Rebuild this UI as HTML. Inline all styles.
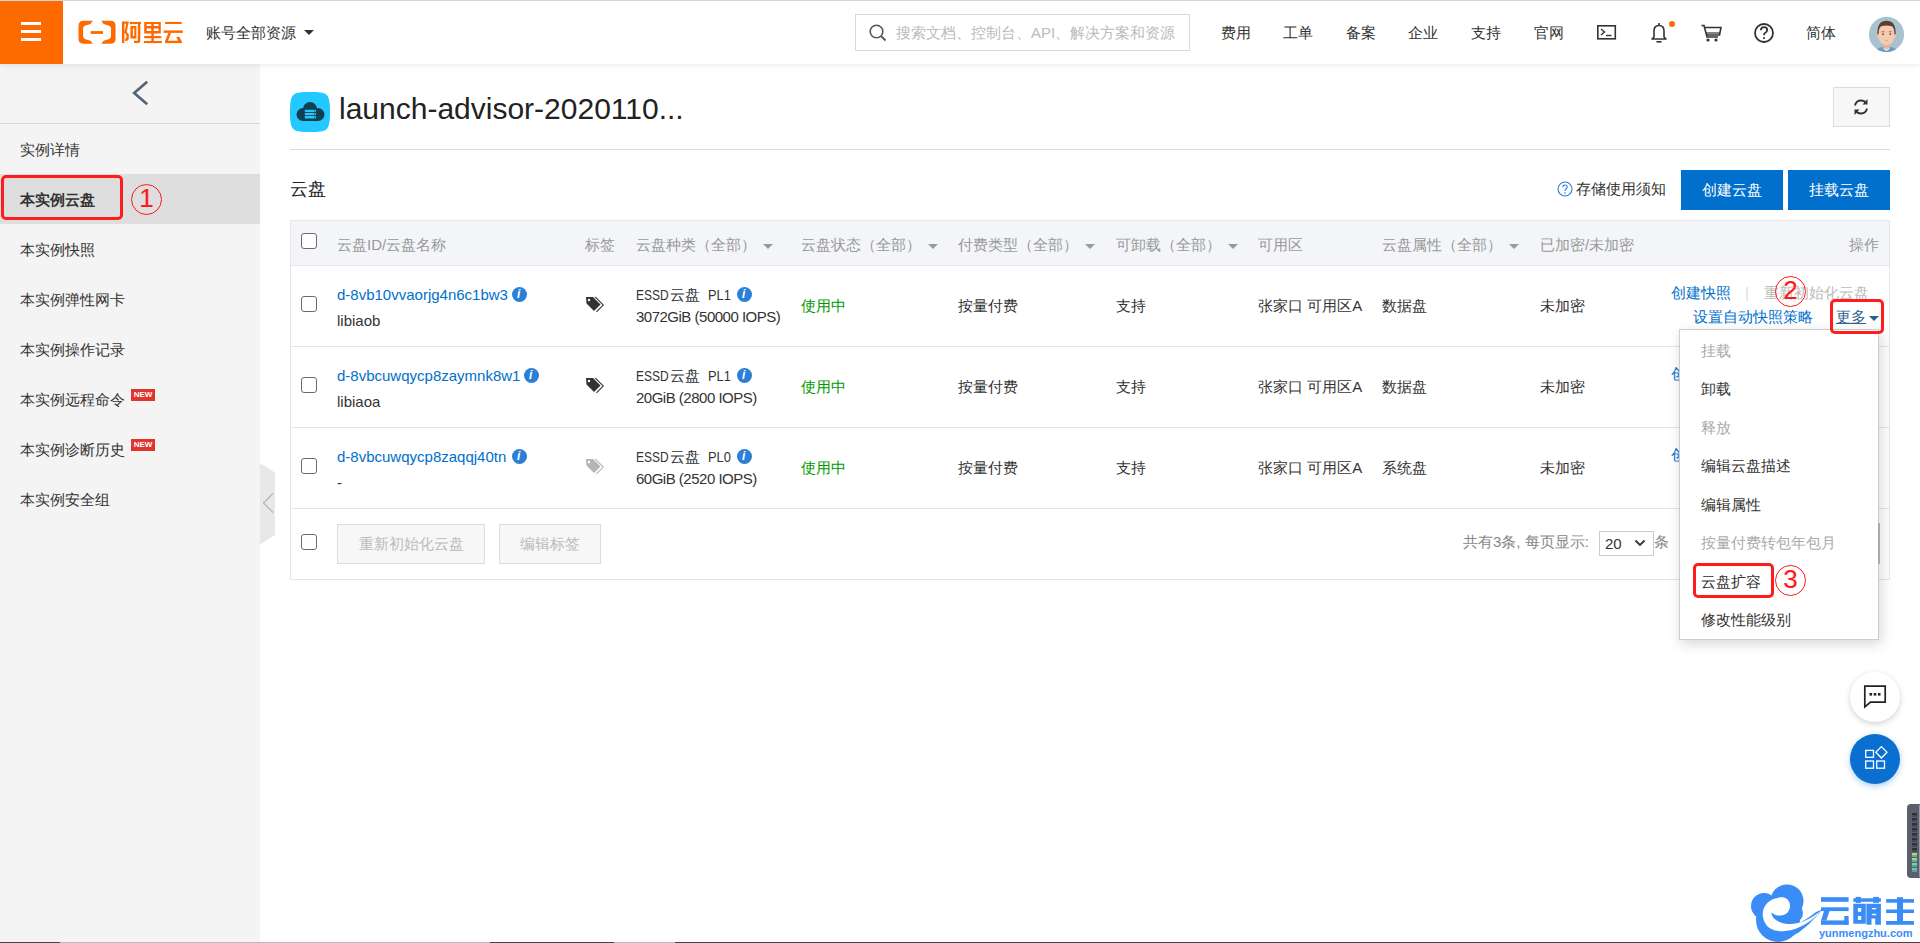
<!DOCTYPE html>
<html><head><meta charset="utf-8">
<style>
*{box-sizing:border-box;margin:0;padding:0}
html,body{width:1920px;height:943px;overflow:hidden;background:#fff;font-family:"Liberation Sans",sans-serif;font-size:15px;color:#333}
.a{position:absolute;white-space:nowrap;line-height:20px}
#top{position:absolute;left:0;top:0;width:1920px;height:64px;background:#fff;border-top:1px solid #d3d6db;box-shadow:0 2px 5px rgba(0,0,0,.07);z-index:5}
#ham{position:absolute;left:0;top:0;width:63px;height:63px;background:#ff6a00}
#ham i{position:absolute;left:21px;width:20px;height:3px;background:#fff}
#side{position:absolute;left:0;top:64px;width:260px;height:879px;background:#f4f4f4}
.mi{left:20px;color:#333}
.th{top:235px;color:#999}
.tri{position:absolute;width:0;height:0;border-left:5px solid transparent;border-right:5px solid transparent;border-top:5px solid #666}
.cb{position:absolute;left:301px;width:16px;height:16px;border:1.3px solid #6b6b6b;border-radius:3px;background:#fff}
.lnk{color:#0070cc}
.info{position:absolute;width:15px;height:15px;border-radius:50%;background:#2b7fd6}
.info:after{content:"i";position:absolute;left:5px;top:0;color:#fff;font-style:italic;font-weight:bold;font-size:12px;line-height:15px}
.hl{position:absolute;left:290px;width:1600px;height:1px;background:#e3e7ec}
.rc{position:absolute;width:31px;height:31px;border-radius:50%;border:1.8px solid #ff1a1a;color:#ff1a1a;text-align:center;font-size:26px;line-height:27px;-webkit-text-stroke:0.15px #ff1a1a}
.rb{position:absolute;border:3.8px solid #ff1c1c;border-radius:5px}
.new{position:absolute;left:131px;width:24px;height:12px;background:#e0352b;color:#fff;font-size:8px;font-weight:bold;line-height:12px;text-align:center}
.dm{left:1701px;color:#333}
.dm.g{color:#aaa}
.btn{position:absolute;background:#f7f7f7;border:1px solid #dcdcdc;color:#bbb;text-align:center;line-height:38px}
.pb{position:absolute;background:#0070cc;color:#fff;text-align:center;line-height:40px}
</style></head><body>

<!-- TOP BAR -->
<div id="top">
  <div id="ham"><i style="top:21px"></i><i style="top:29px"></i><i style="top:37px"></i></div>
  <svg class="a" style="left:76px;top:17px" width="110" height="28" viewBox="76 18 110 28"><g fill="#ff6a00">
    <path d="M92.9 20.8 H83.5 Q78.5 20.8 78.5 26 V38.6 Q78.5 43.8 83.5 43.8 H92.9 L90.5 40.8 L85.5 39.2 Q83.1 38.5 83.1 36 V28.5 Q83.1 26 85.5 25.4 L90.5 23.9 Z"/>
    <path d="M101.2 20.8 H110.6 Q115.6 20.8 115.6 26 V38.6 Q115.6 43.8 110.6 43.8 H101.2 L103.6 40.8 L108.6 39.2 Q111 38.5 111 36 V28.5 Q111 26 108.6 25.4 L103.6 23.9 Z"/>
    <rect x="90.7" y="31.1" width="12.3" height="2.8"/>
    <path d="M121.9 21.5 H128.8 L126.7 32 L128.8 34.2 V38.8 Q128.8 40.9 126.2 40.9 H125.2 V38.6 Q126.4 38.6 126.4 37.6 V35 L124.4 32.6 L126.2 23.8 H124.4 V43.1 H121.9 Z"/>
    <rect x="129.7" y="21.9" width="11.3" height="2.2"/>
    <path d="M137.8 21.9 H140.3 V40.5 Q140.3 43.1 137.5 43.1 H134 V40.7 H137.8 Z"/>
    <path fill-rule="evenodd" d="M130.4 26.1 H136.4 V38.5 H130.4 Z M132.9 28.6 V36 H134.3 V28.6 Z"/>
    <path fill-rule="evenodd" d="M144.2 21.9 H160.8 V33.6 H144.2 Z M146.7 24 V26.1 H151.3 V24 Z M153.8 24 V26.1 H158.6 V24 Z M146.7 28.6 V31.1 H151.3 V28.6 Z M153.8 28.6 V31.1 H158.6 V28.6 Z"/>
    <rect x="151.3" y="33" width="2.5" height="8.5"/>
    <rect x="144.2" y="36" width="17" height="2.2"/>
    <rect x="143.9" y="41" width="18" height="2.1"/>
    <rect x="165.1" y="21.9" width="16.6" height="2.1"/>
    <rect x="163.7" y="30.4" width="19.1" height="2.5"/>
    <polygon points="168.3,32.9 171.1,32.9 167.9,40.9 165.1,40.9"/>
    <rect x="165.1" y="40.7" width="16.6" height="2.4"/>
    <polygon points="176.4,37.1 179.6,37.1 182.1,43.1 178.9,43.1"/>
  </g></svg>
  <div class="a" style="left:206px;top:22px">账号全部资源</div>
  <div class="tri" style="left:304px;top:29px;border-top-color:#333"></div>
  <div class="a" style="left:855px;top:13px;width:335px;height:37px;border:1px solid #d9d9d9;"></div>
  <svg class="a" style="left:869px;top:23px" width="18" height="18" viewBox="0 0 18 18"><circle cx="7.5" cy="7.5" r="6.3" fill="none" stroke="#555" stroke-width="1.6"/><path d="M12 12 L16.5 16.5" stroke="#555" stroke-width="1.8"/></svg>
  <div class="a" style="left:896px;top:22px;color:#bbb">搜索文档、控制台、API、解决方案和资源</div>
  <div class="a" style="left:1221px;top:22px">费用</div>
  <div class="a" style="left:1283px;top:22px">工单</div>
  <div class="a" style="left:1346px;top:22px">备案</div>
  <div class="a" style="left:1408px;top:22px">企业</div>
  <div class="a" style="left:1471px;top:22px">支持</div>
  <div class="a" style="left:1534px;top:22px">官网</div>
  <svg class="a" style="left:1596px;top:23px" width="22" height="18" viewBox="0 0 22 18"><rect x="1.8" y="1.8" width="17.5" height="13" fill="none" stroke="#333" stroke-width="1.6"/><path d="M5 5 L8.5 8 L5 11" fill="none" stroke="#333" stroke-width="1.4"/><path d="M10 11.5 H15.5" stroke="#333" stroke-width="1.4"/></svg>
  <svg class="a" style="left:1650px;top:21px" width="18" height="22" viewBox="0 0 18 22"><path d="M9 1 V3" stroke="#333" stroke-width="1.6"/><path d="M4 15 V9 Q4 3.5 9 3.5 Q14 3.5 14 9 V15 L16 17 H2 Z" fill="none" stroke="#333" stroke-width="1.6" stroke-linejoin="round"/><path d="M6.5 19.8 H11.5" stroke="#333" stroke-width="1.6"/></svg>
  <div class="a" style="left:1669px;top:20px;width:6px;height:6px;border-radius:50%;background:#ff6a00"></div>
  <svg class="a" style="left:1701px;top:23px" width="22" height="20" viewBox="0 0 22 20"><path d="M0.5 1.5 H3 L6 13 H17" fill="none" stroke="#333" stroke-width="1.6"/><path d="M4 3.5 H20 L18.5 11 H6" fill="none" stroke="#333" stroke-width="1.6"/><path d="M5 9 H19" stroke="#333" stroke-width="1.2"/><circle cx="7" cy="16" r="1.6" fill="#333"/><circle cx="15" cy="16" r="1.6" fill="#333"/></svg>
  <svg class="a" style="left:1753px;top:21px" width="22" height="22" viewBox="0 0 22 22"><circle cx="11" cy="11" r="9" fill="none" stroke="#333" stroke-width="1.8"/><path d="M7.8 8.3 Q8 5.2 11 5.2 Q14.2 5.2 14.2 8 Q14.2 9.8 12 11 Q11 11.6 11 13.3" fill="none" stroke="#333" stroke-width="1.8"/><circle cx="11" cy="16" r="1.1" fill="#333"/></svg>
  <div class="a" style="left:1806px;top:22px">简体</div>
  <svg class="a" style="left:1868px;top:15px" width="37" height="37" viewBox="1868 16 37 37">
    <defs><clipPath id="av"><circle cx="1886.5" cy="34.4" r="17.6"/></clipPath></defs>
    <circle cx="1886.5" cy="34.4" r="17.6" fill="#a8c3cf"/>
    <g clip-path="url(#av)">
      <path d="M1873 53 Q1876 48 1882 47 H1891 Q1897 48 1900 53 Z" fill="#6e9cbc"/>
      <path d="M1883.5 42 H1889.5 V48 Q1886.5 50 1883.5 48 Z" fill="#e9b095"/>
      <path d="M1883.8 47.5 L1886.5 49.5 L1889.2 47.5 L1889.5 49 L1886.5 51 L1883.5 49 Z" fill="#e8eef2"/>
      <ellipse cx="1878.3" cy="36" rx="1.6" ry="2.4" fill="#f1c0a0"/><ellipse cx="1894.7" cy="36" rx="1.6" ry="2.4" fill="#f1c0a0"/>
      <path d="M1879 30 Q1879 22 1886.5 22 Q1894 22 1894 30 V37 Q1894 44.5 1886.5 45 Q1879 44.5 1879 37 Z" fill="#f6cbb0"/>
      <path d="M1877.5 35 Q1876.5 21 1886.5 20.8 Q1896.5 21 1895.5 35 L1894.3 33.5 Q1894.5 27 1891 26 Q1886.5 25.2 1882 26 Q1878.6 27 1878.7 33.5 Z" fill="#5b3e35"/>
      <circle cx="1883" cy="34.2" r="0.9" fill="#6b4c40"/><circle cx="1890.3" cy="34.2" r="0.9" fill="#6b4c40"/>
      <path d="M1881.5 31.8 H1884.5 M1888.8 31.8 H1891.8" stroke="#6b4c40" stroke-width="0.7"/>
      <path d="M1885 40.5 H1888" stroke="#d9a088" stroke-width="0.7"/>
    </g>
  </svg>
</div>

<!-- SIDEBAR -->
<div id="side">
  <div class="a" style="left:0;top:110px;width:260px;height:50px;background:#dedede"></div>
  <div class="a" style="left:0;top:59px;width:260px;height:1px;background:#d9d9d9"></div>
</div>
<svg class="a" style="left:130px;top:79px" width="20" height="28" viewBox="0 0 20 28"><path d="M17.2 2.8 L4.2 14 L17.2 25.2" fill="none" stroke="#546478" stroke-width="2.7"/></svg>
<div class="a mi" style="top:140px">实例详情</div>
<div class="a mi" style="top:190px;font-weight:bold">本实例云盘</div>
<div class="a mi" style="top:240px">本实例快照</div>
<div class="a mi" style="top:290px">本实例弹性网卡</div>
<div class="a mi" style="top:340px">本实例操作记录</div>
<div class="a mi" style="top:390px">本实例远程命令</div>
<div class="new" style="top:389px">NEW</div>
<div class="a mi" style="top:440px">本实例诊断历史</div>
<div class="new" style="top:439px">NEW</div>
<div class="a mi" style="top:490px">本实例安全组</div>
<div class="rb" style="left:1px;top:175px;width:122px;height:45px"></div>
<div class="rc" style="left:131px;top:184px">1</div>
<svg class="a" style="left:260px;top:463px" width="16" height="82" viewBox="0 0 16 82"><path d="M0 0 L15 9.5 V72 L0 81.5 Z" fill="#e8e8e8"/><path d="M13 30.5 L3.5 40 L13 49.5" fill="none" stroke="#b3b3b3" stroke-width="1.1"/></svg>

<!-- MAIN -->
<svg class="a" style="left:290px;top:92px" width="40" height="40" viewBox="0 0 40 40">
  <path d="M20 0 C37 0 40 0.5 40 20 C40 39.5 37 40 20 40 C3 40 0 39.5 0 20 C0 0.5 3 0 20 0 Z" fill="#22c8ff"/>
  <g fill="#123f50"><circle cx="13" cy="22.5" r="6.5"/><circle cx="20" cy="17" r="7"/><circle cx="28" cy="22.5" r="6.5"/><rect x="13" y="18" width="15" height="11"/></g>
  <g fill="#22c8ff"><rect x="14.8" y="17.8" width="11.2" height="2.2"/><rect x="14.8" y="20.9" width="11.2" height="2.3"/><rect x="14.8" y="24" width="11.2" height="2.5"/></g>
  <g fill="#123f50"><rect x="24.3" y="18.3" width="0.9" height="1.2"/><rect x="24.3" y="21.5" width="0.9" height="1.2"/><rect x="24.3" y="24.6" width="0.9" height="1.2"/></g>
</svg>
<div class="a" style="left:339px;top:89px;font-size:30px;line-height:40px;color:#222">launch-advisor-2020110...</div>
<div class="a" style="left:1833px;top:87px;width:57px;height:40px;background:#f7f7f7;border:1px solid #dcdcdc"></div>
<svg class="a" style="left:1852px;top:97px" width="18" height="20" viewBox="0 0 18 20"><path d="M3 8.5 Q4 3.5 9 3.5 Q12.5 3.5 14 6" fill="none" stroke="#333" stroke-width="1.8"/><path d="M15.5 2 V7.5 H10.5 Z" fill="#333"/><path d="M15 11.5 Q14 16.5 9 16.5 Q5.5 16.5 4 14" fill="none" stroke="#333" stroke-width="1.8"/><path d="M2.5 18 V12.5 H7.5 Z" fill="#333"/></svg>
<div class="a" style="left:290px;top:149px;width:1600px;height:1px;background:#dcdcdc"></div>
<div class="a" style="left:290px;top:179px;font-size:18px;color:#222">云盘</div>
<svg class="a" style="left:1557px;top:181px" width="16" height="16" viewBox="0 0 16 16"><circle cx="8" cy="8" r="7" fill="none" stroke="#2b7fd6" stroke-width="1.1"/><path d="M5.8 6.2 Q5.8 4 8 4 Q10.2 4 10.2 6 Q10.2 7.3 8.8 8 Q8 8.5 8 10" fill="none" stroke="#2b7fd6" stroke-width="1.1"/><circle cx="8" cy="12" r=".8" fill="#2b7fd6"/></svg>
<div class="a" style="left:1576px;top:179px;color:#333">存储使用须知</div>
<div class="pb" style="left:1681px;top:170px;width:102px;height:40px">创建云盘</div>
<div class="pb" style="left:1788px;top:170px;width:102px;height:40px">挂载云盘</div>

<!-- TABLE -->
<div class="a" style="left:290px;top:220px;width:1600px;height:360px;border:1px solid #e3e7ec"></div>
<div class="a" style="left:291px;top:221px;width:1598px;height:44px;background:#f3f5f8"></div>
<div class="hl" style="top:265px"></div>
<div class="hl" style="top:346px"></div>
<div class="hl" style="top:427px"></div>
<div class="hl" style="top:508px"></div>

<div class="cb" style="top:233px"></div>
<div class="a th" style="left:337px">云盘ID/云盘名称</div>
<div class="a th" style="left:585px">标签</div>
<div class="a th" style="left:636px">云盘种类（全部）</div><div class="tri" style="left:763px;top:244px;border-top-color:#999"></div>
<div class="a th" style="left:801px">云盘状态（全部）</div><div class="tri" style="left:928px;top:244px;border-top-color:#999"></div>
<div class="a th" style="left:958px">付费类型（全部）</div><div class="tri" style="left:1085px;top:244px;border-top-color:#999"></div>
<div class="a th" style="left:1116px">可卸载（全部）</div><div class="tri" style="left:1228px;top:244px;border-top-color:#999"></div>
<div class="a th" style="left:1258px">可用区</div>
<div class="a th" style="left:1382px">云盘属性（全部）</div><div class="tri" style="left:1509px;top:244px;border-top-color:#999"></div>
<div class="a th" style="left:1540px">已加密/未加密</div>
<div class="a th" style="left:1849px">操作</div>

<!-- rows placeholder -->
<div class="cb" style="top:296px"></div>
<div class="a lnk" style="left:337px;top:285px">d-8vb10vvaorjg4n6c1bw3</div>
<div class="info" style="left:512px;top:287px"></div>
<div class="a" style="left:337px;top:311px">libiaob</div>
<svg class="a" style="left:585px;top:296px" width="21" height="17" viewBox="0 0 21 17"><path d="M9.5 1 L17.5 9 L11 15.5 L11.8 16.3 L19 9 L10.8 0.8 Z" fill="#333"/><path d="M1 1 H8 L15.5 8.5 L9 15 L1.5 7.5 Z" fill="#333"/><circle cx="4" cy="4" r="1.2" fill="#fff"/></svg>
<div class="a" style="left:636px;top:285px;transform:scaleX(0.8);transform-origin:0 0">ESSD</div><div class="a" style="left:670px;top:285px">云盘</div><div class="a" style="left:708px;top:285px;transform:scaleX(0.86);transform-origin:0 0">PL1</div>
<div class="info" style="left:737px;top:287px"></div>
<div class="a" style="left:636px;top:307px;letter-spacing:-0.5px">3072GiB (50000 IOPS)</div>
<div class="a" style="left:801px;top:296px;color:#009a00">使用中</div>
<div class="a" style="left:958px;top:296px">按量付费</div>
<div class="a" style="left:1116px;top:296px">支持</div>
<div class="a" style="left:1258px;top:296px">张家口 可用区A</div>
<div class="a" style="left:1382px;top:296px">数据盘</div>
<div class="a" style="left:1540px;top:296px">未加密</div>
<div class="a lnk" style="left:1671px;top:283px">创建快照</div>
<div class="a" style="left:1745px;top:283px;color:#ddd">|</div>
<div class="a" style="left:1764px;top:283px;color:#bbb">重新初始化云盘</div>
<div class="a lnk" style="left:1693px;top:307px">设置自动快照策略</div>
<div class="a" style="left:1836px;top:307px;color:#2d5f91;text-decoration:underline">更多</div>
<div class="tri" style="left:1869px;top:316px;border-top-color:#2d5f91"></div>
<div class="cb" style="top:377px"></div>
<div class="a lnk" style="left:337px;top:366px">d-8vbcuwqycp8zaymnk8w1</div>
<div class="info" style="left:524px;top:368px"></div>
<div class="a" style="left:337px;top:392px">libiaoa</div>
<svg class="a" style="left:585px;top:377px" width="21" height="17" viewBox="0 0 21 17"><path d="M9.5 1 L17.5 9 L11 15.5 L11.8 16.3 L19 9 L10.8 0.8 Z" fill="#333"/><path d="M1 1 H8 L15.5 8.5 L9 15 L1.5 7.5 Z" fill="#333"/><circle cx="4" cy="4" r="1.2" fill="#fff"/></svg>
<div class="a" style="left:636px;top:366px;transform:scaleX(0.8);transform-origin:0 0">ESSD</div><div class="a" style="left:670px;top:366px">云盘</div><div class="a" style="left:708px;top:366px;transform:scaleX(0.86);transform-origin:0 0">PL1</div>
<div class="info" style="left:737px;top:368px"></div>
<div class="a" style="left:636px;top:388px;letter-spacing:-0.5px">20GiB (2800 IOPS)</div>
<div class="a" style="left:801px;top:377px;color:#009a00">使用中</div>
<div class="a" style="left:958px;top:377px">按量付费</div>
<div class="a" style="left:1116px;top:377px">支持</div>
<div class="a" style="left:1258px;top:377px">张家口 可用区A</div>
<div class="a" style="left:1382px;top:377px">数据盘</div>
<div class="a" style="left:1540px;top:377px">未加密</div>
<div class="a lnk" style="left:1671px;top:364px">创建快照</div>
<div class="a" style="left:1745px;top:364px;color:#ddd">|</div>
<div class="a" style="left:1764px;top:364px;color:#bbb">重新初始化云盘</div>
<div class="a lnk" style="left:1693px;top:388px">设置自动快照策略</div>
<div class="a" style="left:1836px;top:388px;color:#2d5f91;text-decoration:underline">更多</div>
<div class="tri" style="left:1869px;top:397px;border-top-color:#2d5f91"></div>
<div class="cb" style="top:458px"></div>
<div class="a lnk" style="left:337px;top:447px">d-8vbcuwqycp8zaqqj40tn</div>
<div class="info" style="left:512px;top:449px"></div>
<div class="a" style="left:337px;top:473px">-</div>
<svg class="a" style="left:585px;top:458px" width="21" height="17" viewBox="0 0 21 17"><path d="M9.5 1 L17.5 9 L11 15.5 L11.8 16.3 L19 9 L10.8 0.8 Z" fill="#b5b5b5"/><path d="M1 1 H8 L15.5 8.5 L9 15 L1.5 7.5 Z" fill="#b5b5b5"/><circle cx="4" cy="4" r="1.2" fill="#fff"/></svg>
<div class="a" style="left:636px;top:447px;transform:scaleX(0.8);transform-origin:0 0">ESSD</div><div class="a" style="left:670px;top:447px">云盘</div><div class="a" style="left:708px;top:447px;transform:scaleX(0.86);transform-origin:0 0">PL0</div>
<div class="info" style="left:737px;top:449px"></div>
<div class="a" style="left:636px;top:469px;letter-spacing:-0.5px">60GiB (2520 IOPS)</div>
<div class="a" style="left:801px;top:458px;color:#009a00">使用中</div>
<div class="a" style="left:958px;top:458px">按量付费</div>
<div class="a" style="left:1116px;top:458px">支持</div>
<div class="a" style="left:1258px;top:458px">张家口 可用区A</div>
<div class="a" style="left:1382px;top:458px">系统盘</div>
<div class="a" style="left:1540px;top:458px">未加密</div>
<div class="a lnk" style="left:1671px;top:445px">创建快照</div>
<div class="a" style="left:1745px;top:445px;color:#ddd">|</div>
<div class="a" style="left:1764px;top:445px;color:#bbb">重新初始化云盘</div>
<div class="a lnk" style="left:1693px;top:469px">设置自动快照策略</div>
<div class="a" style="left:1836px;top:469px;color:#2d5f91;text-decoration:underline">更多</div>
<div class="tri" style="left:1869px;top:478px;border-top-color:#2d5f91"></div>

<!-- footer -->
<div class="cb" style="top:534px"></div>
<div class="btn" style="left:337px;top:524px;width:148px;height:40px">重新初始化云盘</div>
<div class="btn" style="left:499px;top:524px;width:102px;height:40px">编辑标签</div>
<div class="a" style="left:1463px;top:532px;color:#888">共有3条, 每页显示:</div>
<div class="a" style="left:1599px;top:531px;width:55px;height:25px;border:1px solid #ccc;background:#fff"></div>
<div class="a" style="left:1605px;top:534px;color:#333">20</div>
<svg class="a" style="left:1634px;top:538px" width="12" height="10" viewBox="0 0 12 10"><path d="M1.5 2.5 L6 7 L10.5 2.5" fill="none" stroke="#333" stroke-width="1.8"/></svg>
<div class="a" style="left:1654px;top:532px;color:#888">条</div>

<div class="a" style="left:1679px;top:329px;width:200px;height:311px;background:#fff;border:1px solid #cdcdcd;box-shadow:2px 4px 12px rgba(0,0,0,.16)"></div>
<div class="a dm g" style="top:341px">挂载</div>
<div class="a dm" style="top:379px">卸载</div>
<div class="a dm g" style="top:418px">释放</div>
<div class="a dm" style="top:456px">编辑云盘描述</div>
<div class="a dm" style="top:495px">编辑属性</div>
<div class="a dm g" style="top:533px">按量付费转包年包月</div>
<div class="a dm" style="top:572px">云盘扩容</div>
<div class="a dm" style="top:610px">修改性能级别</div>
<div class="rc" style="left:1775px;top:276px">2</div>
<div class="rb" style="left:1830px;top:299px;width:54px;height:35px"></div>
<div class="rb" style="left:1693px;top:563px;width:81px;height:35px"></div>
<div class="rc" style="left:1775px;top:565px">3</div>
<div class="a" style="left:1878px;top:523px;width:1.5px;height:41px;background:#aaa"></div>
<div class="a" style="left:1850px;top:672px;width:50px;height:50px;border-radius:50%;background:#fff;box-shadow:0 2px 6px rgba(0,0,0,.18)"></div>
<svg class="a" style="left:1855px;top:675px" width="40" height="40" viewBox="1855 675 40 40"><path d="M1864.8 686.2 H1885.2 V702.2 H1870.5 L1864.8 707 Z" fill="none" stroke="#222" stroke-width="1.7"/><rect x="1869.5" y="693" width="2.6" height="2.6" fill="#222"/><rect x="1873.7" y="693" width="2.6" height="2.6" fill="#222"/><rect x="1877.9" y="693" width="2.6" height="2.6" fill="#222"/></svg>
<div class="a" style="left:1850px;top:734px;width:50px;height:50px;border-radius:50%;background:#0a6fd0;box-shadow:0 2px 6px rgba(10,111,208,.35)"></div>
<svg class="a" style="left:1855px;top:740px" width="40" height="40" viewBox="1855 740 40 40"><g fill="none" stroke="#fff" stroke-width="1.3"><rect x="1865.7" y="750.4" width="7.8" height="6.9"/><rect x="1865.7" y="761" width="7.8" height="7.2"/><rect x="1876.7" y="761" width="7.8" height="7.2"/><path d="M1881.4 746.6 L1887 752.3 L1881.4 758 L1875.8 752.3 Z"/></g></svg>
<div class="a" style="left:1907px;top:804px;width:13px;height:74px;border-radius:4px 0 0 4px;background:#5b5f6b"></div>
<div class="a" style="left:1918.5px;top:805px;width:1.5px;height:72px;background:#9a9ca6"></div>
<div class="a" style="left:1912px;top:813px;width:5px;height:1.6px;background:#2c3038"></div>
<div class="a" style="left:1912px;top:815px;width:5px;height:2px;background:#454953"></div>
<div class="a" style="left:1912px;top:818px;width:5px;height:1.6px;background:#2c3038"></div>
<div class="a" style="left:1912px;top:820px;width:5px;height:2px;background:#454953"></div>
<div class="a" style="left:1912px;top:823px;width:5px;height:1.6px;background:#2c3038"></div>
<div class="a" style="left:1912px;top:825px;width:5px;height:2px;background:#454953"></div>
<div class="a" style="left:1912px;top:828px;width:5px;height:1.6px;background:#2c3038"></div>
<div class="a" style="left:1912px;top:830px;width:5px;height:2px;background:#454953"></div>
<div class="a" style="left:1912px;top:833px;width:5px;height:1.6px;background:#2c3038"></div>
<div class="a" style="left:1912px;top:835px;width:5px;height:2px;background:#454953"></div>
<div class="a" style="left:1912px;top:838px;width:5px;height:1.6px;background:#2c3038"></div>
<div class="a" style="left:1912px;top:840px;width:5px;height:2px;background:#454953"></div>
<div class="a" style="left:1912px;top:843px;width:5px;height:1.6px;background:#2c3038"></div>
<div class="a" style="left:1912px;top:845px;width:5px;height:2px;background:#454953"></div>
<div class="a" style="left:1912px;top:848px;width:5px;height:1.6px;background:#2c3038"></div>
<div class="a" style="left:1912px;top:850px;width:5px;height:2px;background:#454953"></div>
<div class="a" style="left:1912px;top:853px;width:5px;height:1.6px;background:#9ee08a"></div>
<div class="a" style="left:1912px;top:855px;width:5px;height:2px;background:#9ee08a;opacity:.55"></div>
<div class="a" style="left:1912px;top:858px;width:5px;height:1.6px;background:#86dc98"></div>
<div class="a" style="left:1912px;top:860px;width:5px;height:2px;background:#86dc98;opacity:.55"></div>
<div class="a" style="left:1912px;top:863px;width:5px;height:1.6px;background:#6cd6a8"></div>
<div class="a" style="left:1912px;top:865px;width:5px;height:2px;background:#6cd6a8;opacity:.55"></div>
<div class="a" style="left:1912px;top:868px;width:5px;height:1.6px;background:#55d0b8"></div>
<div class="a" style="left:1912px;top:870px;width:5px;height:2px;background:#55d0b8;opacity:.55"></div>
<svg class="a" style="left:1745px;top:875px" width="175" height="68" viewBox="1745 875 175 68">
<g fill="#3a8cf6">
<circle cx="1764" cy="906" r="13"/><circle cx="1787" cy="901" r="16.5"/><circle cx="1778" cy="920" r="22"/><circle cx="1793" cy="913" r="10"/>
</g>
<path fill="#3a8cf6" d="M1772 941 C1796 939 1811 925 1822 909.5 L1816 912 C1806 920 1794 927 1780 930 Z"/>
<path fill="#fff" d="M1783 897.3 C1769 897 1761 907 1763 917 C1765 929 1775 932 1785 931 C1800 930 1813 920 1821 910.5 C1811 919 1799 925 1787 924 C1777 923 1771 917 1771.4 912.4 C1775 916 1782 917 1787 913 C1792 908 1791 899 1783 897.3 Z"/>
<path fill="none" stroke="#fff" stroke-width="0.8" d="M1800 932 Q1810 925 1818 914 M1803 934 Q1811 929 1816 922 M1801 937 Q1809 933 1813 929"/>
<g fill="#3a8cf6">
<rect x="1821" y="897.2" width="27.6" height="4.6"/><rect x="1821" y="907.3" width="27.6" height="3.8"/>
<polygon points="1824,911 1829.5,911 1826.3,920.5 1821,920.5"/><rect x="1821" y="920.4" width="27.6" height="4.4"/><rect x="1844.3" y="916" width="4.3" height="8.8"/>
<rect x="1853.3" y="898.3" width="27.6" height="3.5"/><rect x="1855.7" y="896.9" width="5.2" height="6"/><rect x="1873.2" y="896.9" width="5.8" height="6"/>
<path fill-rule="evenodd" d="M1853.3 903.8 H1865.8 V923.7 H1853.3 Z M1857.9 908.1 H1861.2 V911.7 H1857.9 Z M1857.9 916 H1861.2 V919.9 H1857.9 Z"/>
<path fill-rule="evenodd" d="M1866.4 903.8 H1880.9 V924.8 H1875.2 V918.5 H1871.5 V924.8 H1866.4 Z M1871.9 907.9 H1876.2 V909.2 H1871.9 Z M1871.9 913.8 H1876.2 V915.2 H1871.9 Z"/>
<rect x="1897" y="897.2" width="6" height="3"/><rect x="1886.1" y="899.1" width="27.9" height="3.6"/><rect x="1886.1" y="909.5" width="27.9" height="3.5"/><rect x="1886.1" y="921" width="27.9" height="3.8"/><rect x="1897" y="899" width="6" height="23"/>
</g>
</svg>
<div class="a" style="left:1819px;top:926px;font-size:11px;line-height:14px;font-weight:bold;color:#3a8cf6">yunmengzhu.com</div>
<div class="a" style="left:0;top:942px;width:1920px;height:1px;background:#444"></div>
<div class="a" style="left:60px;top:942px;width:430px;height:1px;background:#bbb"></div>
<div class="a" style="left:614px;top:942px;width:61px;height:1px;background:#bbb"></div>

</body></html>
